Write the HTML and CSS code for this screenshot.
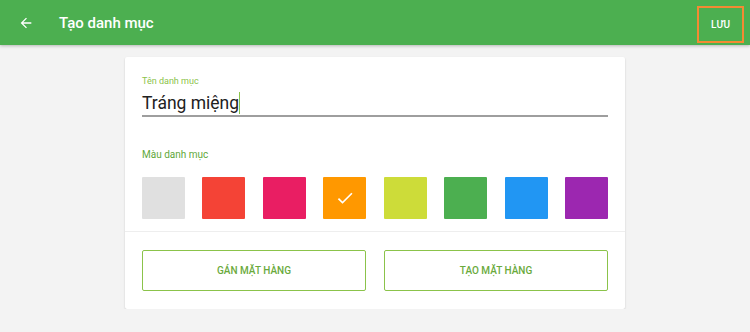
FILE: index.html
```html
<!DOCTYPE html>
<html lang="vi">
<head>
  <meta charset="UTF-8">
  <title>Tạo danh mục</title>
  <link rel="stylesheet" href="styles.css">
</head>
<body>
  <header class="toolbar">
    <div class="back-button">
      <svg width="16" height="16" viewBox="0 0 24 24"><path d="M20 11H7.83l5.59-5.59L12 4l-8 8 8 8 1.41-1.41L7.83 13H20v-2z" fill="#fff"/></svg>
    </div>
    <div class="title">Tạo danh mục</div>
    <div class="save-button">LƯU</div>
  </header>

  <div class="card">
    <div class="card-body">
      <div class="field-label">Tên danh mục</div>
      <div class="field-input">Tráng miệng<span class="cursor"></span></div>

      <div class="section-label">Màu danh mục</div>
      <div class="swatches">
        <div class="swatch" style="background:#e0e0e0"></div>
        <div class="swatch" style="background:#f44336"></div>
        <div class="swatch" style="background:#e91e63"></div>
        <div class="swatch" style="background:#ff9800">
          <svg width="20" height="20" viewBox="0 0 24 24"><path d="M9 16.17L4.83 12l-1.42 1.41L9 19 21 7l-1.41-1.41z" fill="#fff"/></svg>
        </div>
        <div class="swatch" style="background:#cddc39"></div>
        <div class="swatch" style="background:#4caf50"></div>
        <div class="swatch" style="background:#2196f3"></div>
        <div class="swatch" style="background:#9c27b0"></div>
      </div>
    </div>
    <div class="card-actions">
      <div class="outline-button">GÁN MẶT HÀNG</div>
      <div class="outline-button">TẠO MẶT HÀNG</div>
    </div>
  </div>
</body>
</html>
```

FILE: styles.css
```css
* { box-sizing: border-box; }
body {
  margin: 0;
  background: #f3f3f3;
  font-family: Roboto, 'Liberation Sans', sans-serif;
  color: #212121;
}

.toolbar {
  height: 45px;
  background: #4caf50;
  display: flex;
  align-items: center;
  color: #fff;
  box-shadow: 0 1px 3px rgba(0,0,0,0.25);
}

.back-button {
  width: 16px;
  height: 16px;
  margin-left: 18px;
  display: flex;
}

.title {
  margin-left: 25px;
  font-size: 15px;
  font-weight: 500;
  flex: 1;
}

.save-button {
  width: 47px;
  height: 37px;
  margin-right: 6px;
  margin-top: 3px;
  border: 2px solid #f58a33;
  display: flex;
  align-items: center;
  justify-content: center;
  font-size: 10px;
  font-weight: 500;
}

.card {
  width: 500px;
  margin: 12px auto 0;
  background: #fff;
  box-shadow: 0 1px 2px rgba(0,0,0,0.18);
  border-radius: 2px;
}

.card-body {
  padding: 18px 17px 12px;
  border-bottom: 1px solid #eeeeee;
}

.field-label {
  font-size: 9px;
  line-height: 12px;
  color: #8bc34a;
}

.field-input {
  font-size: 17.5px;
  line-height: 24px;
  margin-top: 4px;
  border-bottom: 2px solid #9e9e9e;
  display: flex;
  align-items: center;
}

.cursor {
  display: inline-block;
  width: 1px;
  height: 22px;
  background: #8bc34a;
}

.section-label {
  margin-top: 32px;
  font-size: 10px;
  line-height: 12px;
  color: #5fa83a;
}

.swatches {
  margin-top: 16px;
  display: flex;
  justify-content: space-between;
}

.swatch {
  width: 43px;
  height: 42px;
  border-radius: 1px;
  display: flex;
  align-items: center;
  justify-content: center;
}

.card-actions {
  padding: 18px 17px;
  display: flex;
  gap: 18px;
}

.outline-button {
  flex: 1;
  height: 41px;
  border: 1px solid #8bc34a;
  border-radius: 2px;
  display: flex;
  align-items: center;
  justify-content: center;
  font-size: 10px;
  font-weight: 500;
  color: #6aaa3c;
}
```
